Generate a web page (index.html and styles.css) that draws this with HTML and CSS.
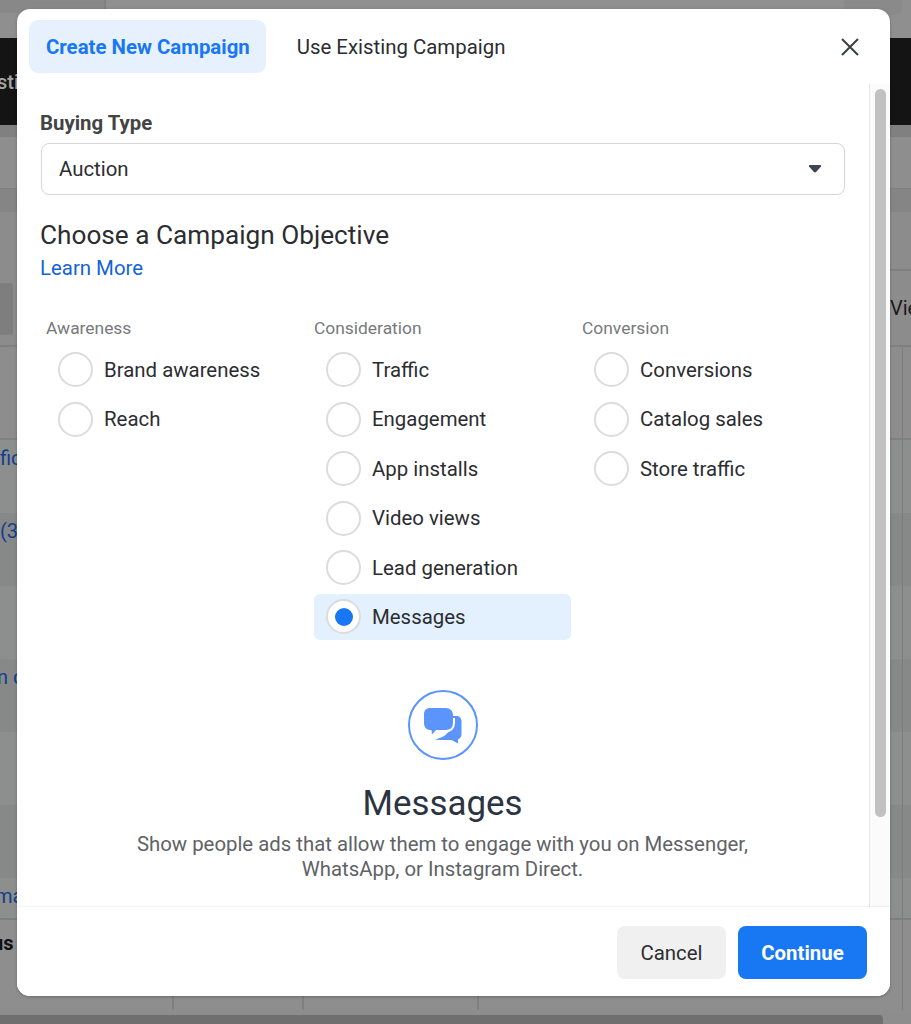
FILE: index.html
```html
<!DOCTYPE html>
<html lang="en">
<head>
    <meta charset="UTF-8">
    <meta name="viewport" content="width=device-width, initial-scale=1.0">
    <title>Create New Campaign</title>
    <link rel="stylesheet" href="styles.css">
</head>
<body>
    <!-- dimmed page behind the dialog -->
    <div class="backdrop">
        <div class="bg-row bg-top"><span class="bg-top-cell"></span><span class="bg-top-pill"></span></div>
        <div class="bg-row bg-dark"><span class="bg-left bg-left-light">sti</span></div>
        <div class="bg-row bg-band"></div>
        <div class="bg-row bg-sub"></div>
        <div class="bg-row bg-band2"></div>
        <div class="bg-row bg-tools"><span class="bg-tool"></span><span class="bg-right">Vie</span></div>
        <div class="bg-row bg-head"></div>
        <div class="bg-row bg-cell"><span class="bg-left bg-link">fic</span></div>
        <div class="bg-row bg-cell bg-alt"><span class="bg-left bg-link">(3</span></div>
        <div class="bg-row bg-cell"></div>
        <div class="bg-row bg-cell bg-alt"><span class="bg-left bg-link bg-link-n">n c</span></div>
        <div class="bg-row bg-cell"></div>
        <div class="bg-row bg-cell bg-alt"></div>
        <div class="bg-row bg-last"><span class="bg-left bg-link bg-link-last">ma</span></div>
        <div class="bg-row bg-total">
            <span class="bg-left bg-left-bold">us</span>
            <span class="col-line col-a"></span>
            <span class="col-line col-b"></span>
            <span class="col-line col-c"></span>
        </div>
        <div class="bg-row bg-track"></div>
        <div class="bg-row bg-scroll"><span class="bg-scroll-thumb"></span></div>
        <div class="bg-right-line"></div>
    </div>

    <div class="modal">
        <div class="modal-tabs">
            <div class="tab tab-active">Create New Campaign</div>
            <div class="tab">Use Existing Campaign</div>
            <svg class="close-icon" width="20" height="20" viewBox="0 0 20 20">
                <path d="M2 2 L18 18 M18 2 L2 18" stroke="#3a3d42" stroke-width="2" fill="none"/>
            </svg>
        </div>

        <div class="modal-scroll">
            <div class="modal-body">
                <div class="field-label">Buying Type</div>
                <div class="select">
                    <span>Auction</span>
                    <svg class="caret" width="14" height="10" viewBox="0 0 16 11">
                        <path d="M2.2 1 H13.8 C15 1 15.4 2.2 14.7 3 L9.2 9 C8.5 9.7 7.5 9.7 6.8 9 L1.3 3 C0.6 2.2 1 1 2.2 1 Z" fill="#3f4450"/>
                    </svg>
                </div>

                <h2 class="objective-title">Choose a Campaign Objective</h2>
                <a class="learn-more">Learn More</a>

                <div class="objectives">
                    <div class="objective-col">
                        <div class="col-title">Awareness</div>
                        <div class="option"><span class="radio"></span>Brand awareness</div>
                        <div class="option"><span class="radio"></span>Reach</div>
                    </div>
                    <div class="objective-col">
                        <div class="col-title">Consideration</div>
                        <div class="option"><span class="radio"></span>Traffic</div>
                        <div class="option"><span class="radio"></span>Engagement</div>
                        <div class="option"><span class="radio"></span>App installs</div>
                        <div class="option"><span class="radio"></span>Video views</div>
                        <div class="option"><span class="radio"></span>Lead generation</div>
                        <div class="option option-selected"><span class="radio radio-on"></span>Messages</div>
                    </div>
                    <div class="objective-col">
                        <div class="col-title">Conversion</div>
                        <div class="option"><span class="radio"></span>Conversions</div>
                        <div class="option"><span class="radio"></span>Catalog sales</div>
                        <div class="option"><span class="radio"></span>Store traffic</div>
                    </div>
                </div>

                <div class="summary">
                    <div class="summary-icon">
                        <svg width="40" height="38" viewBox="0 0 40 38">
                            <path d="M22 10 H33 C36.5 10 38.5 12 38.5 15.5 V28 C38.5 30.5 37.5 32.5 35 33.2 L35 37.5 L28.5 34 H16 L12 33.5 C17 32 20.5 31 23.5 28 C27 25 28 21 28 17 C28 14 26 11 22 10 Z" fill="#5b94fb"/>
                            <path d="M7 2 H23 C27 2 30 5 30 9 V17 C30 21 27 24 23 24 H13 L9 28.5 L8.5 24 H7 C3.5 24 1 21 1 17 V8 C1 4.5 3.5 2 7 2 Z" fill="#5b94fb"/>
                            <path d="M31 12 V17 C31 22 27.5 25.5 23 25.5 H13.5 L11 28.5" fill="none" stroke="#fff" stroke-width="2"/>
                        </svg>
                    </div>
                    <div class="summary-title">Messages</div>
                    <p class="summary-text">Show people ads that allow them to engage with you on Messenger, WhatsApp, or Instagram Direct.</p>
                </div>
            </div>
            <div class="scrollbar"><div class="scroll-thumb"></div></div>
        </div>

        <div class="modal-footer">
            <button class="btn btn-cancel">Cancel</button>
            <button class="btn btn-continue">Continue</button>
        </div>
    </div>
</body>
</html>
```

FILE: styles.css
```css
html, body {
  margin: 0;
  padding: 0;
  height: 1024px;
  overflow: hidden;
}

body {
  position: relative;
  font-family: Roboto, "Liberation Sans", sans-serif;
  background-color: #8d8d8d;
  color: #1c1e21;
}

/* page behind the dialog */
.backdrop {
  display: flex;
  flex-direction: column;
  height: 1024px;
}

.bg-row {
  display: flex;
  justify-content: space-between;
  align-items: flex-start;
  box-sizing: border-box;
  font-size: 20px;
  line-height: 24px;
  white-space: nowrap;
}

.bg-top {
  height: 38px;
  background-color: #8f8f8f;
}

.bg-top-cell {
  width: 104px;
  height: 13px;
  background-color: #888;
  border-right: 2px solid #808080;
}

.bg-top-pill {
  width: 58px;
  height: 15px;
  margin-right: 9px;
  background-color: #8a8a8a;
  border-radius: 0 0 8px 8px;
}

.bg-dark {
  height: 87px;
  background-color: #141414;
  align-items: center;
}

.bg-band {
  height: 12px;
  background-color: #808080;
}

.bg-sub {
  height: 52px;
  background-color: #8e8e8e;
  border-bottom: 1px solid #808080;
}

.bg-band2 {
  height: 23px;
  background-color: #858585;
}

.bg-tools {
  position: relative;
  height: 135px;
  background-color: #8c8c8c;
  border-bottom: 2px solid #7f7f7f;
}

.bg-tools::after {
  content: "";
  position: absolute;
  right: 0;
  top: 57px;
  width: 30px;
  height: 2px;
  background-color: #808080;
}

.bg-tool {
  width: 13px;
  height: 52px;
  margin-top: 71px;
  background-color: #7e7e7e;
  border-radius: 0 3px 3px 0;
}

.bg-head {
  height: 93px;
  background-color: #8d8d8d;
  border-bottom: 2px solid #808080;
}

.bg-cell {
  height: 73px;
  background-color: #8d8f8e;
}

.bg-alt {
  background-color: #878988;
}

.bg-last {
  height: 40px;
  background-color: #8d8f8e;
}

.bg-total {
  height: 92px;
  background-color: #8e8e8e;
  border-top: 2px solid #7e7e7e;
  justify-content: flex-start;
}

.col-line {
  width: 2px;
  height: 90px;
  background-color: #7f7f7f;
}

.col-a { margin-left: 163px; }
.col-b { margin-left: 128px; }
.col-c { margin-left: 173px; }

.bg-track {
  height: 5px;
  background-color: #8d8d8d;
}

.bg-scroll {
  flex: 1;
  background-color: #8d8d8d;
}

.bg-scroll-thumb {
  width: 883px;
  height: 9px;
  background-color: #6f6f6f;
  border-radius: 0 4px 0 0;
}

.bg-right-line {
  position: absolute;
  left: 902px;
  top: 347px;
  width: 1px;
  height: 663px;
  background-color: #7c7c7c;
}

.bg-left {
  display: block;
  width: 17px;
  margin-top: 6px;
}

.bg-dark .bg-left { margin: 0 0 0 -3px; }
.bg-left-light { color: #a5a5a5; font-weight: 500; }
.bg-link { color: #123f8c; }
.bg-link-n { margin-left: -3px; }
.bg-link-last { margin: 6px 0 0 -5px; }
.bg-left-bold { color: #111; font-weight: 700; margin: 11px 0 0 -8px; }
.bg-right { margin-top: 84px; width: 21px; color: #1a1a1a; }

/* dialog */
.modal {
  position: absolute;
  left: 17px;
  top: 9px;
  width: 873px;
  height: 987px;
  background-color: #fff;
  border-radius: 13px;
  box-shadow: 0 1px 3px rgba(0, 0, 0, 0.25);
  display: flex;
  flex-direction: column;
  overflow: hidden;
}

.modal-tabs {
  display: flex;
  align-items: flex-start;
  height: 75px;
  flex-shrink: 0;
  padding: 11px 0 0 12px;
  box-sizing: border-box;
}

.tab {
  height: 53px;
  line-height: 55px;
  padding: 0 17px;
  font-size: 20.4px;
  color: #2b2d31;
  border-radius: 9px;
}

.tab + .tab {
  margin-left: 14px;
}

.tab-active {
  background-color: #e7f0fd;
  color: #1877f2;
  font-weight: 700;
  padding-right: 16px;
}

.close-icon {
  margin-left: auto;
  margin-right: 30px;
  margin-top: 17px;
}

.modal-scroll {
  display: flex;
  height: 823px;
  flex-shrink: 0;
  overflow: hidden;
}

.modal-body {
  flex: 1;
  padding: 25px 24px 0 23px;
  min-width: 0;
}

.scrollbar {
  width: 21px;
  box-sizing: border-box;
  background-color: #fbfbfb;
  border-left: 1px solid #e6e6e6;
  padding: 5px 4px 0 5px;
}

.scroll-thumb {
  height: 728px;
  background-color: #c1c1c1;
  border-radius: 6px;
}

.field-label {
  font-size: 20.4px;
  font-weight: 700;
  color: #444;
  line-height: 28px;
}

.select {
  display: flex;
  justify-content: space-between;
  align-items: center;
  height: 52px;
  margin: 6px 0 0 1px;
  padding: 0 22px 0 17px;
  box-sizing: border-box;
  border: 1px solid #d5d5d5;
  border-radius: 8px;
  font-size: 20.4px;
  color: #2b2d31;
}

.objective-title {
  margin: 23px 0 0;
  font-size: 26.2px;
  font-weight: 400;
  line-height: 34px;
  color: #2b2d31;
}

.learn-more {
  display: block;
  margin-top: 1px;
  font-size: 20.4px;
  line-height: 30px;
  color: #1263d6;
}

.objectives {
  display: flex;
  margin: 33px 0 0 6px;
}

.objective-col {
  width: 268px;
  flex-shrink: 0;
  display: flex;
  flex-direction: column;
  gap: 3.4px;
}

.col-title {
  font-size: 17.4px;
  line-height: 24px;
  color: #77797d;
  margin-bottom: 3.6px;
}

.option {
  display: flex;
  align-items: center;
  gap: 11px;
  width: 257px;
  height: 46px;
  padding-left: 12px;
  box-sizing: border-box;
  font-size: 20.4px;
  color: #2b2d31;
  border-radius: 6px;
}

.option-selected {
  background-color: #e3f0fd;
}

.radio {
  width: 35px;
  height: 35px;
  box-sizing: border-box;
  border: 2px solid #dcdcdc;
  border-radius: 50%;
  background-color: #fff;
  flex-shrink: 0;
  display: flex;
  align-items: center;
  justify-content: center;
}

.radio-on::after {
  content: "";
  width: 18px;
  height: 18px;
  border-radius: 50%;
  background-color: #1877f2;
}

.summary {
  display: flex;
  flex-direction: column;
  align-items: center;
  margin-top: 50px;
  text-align: center;
}

.summary-icon {
  width: 70px;
  height: 70px;
  box-sizing: border-box;
  border: 2px solid #5b94fb;
  border-radius: 50%;
  display: flex;
  align-items: center;
  justify-content: center;
}

.summary-title {
  margin-top: 21px;
  font-size: 34.9px;
  line-height: 46px;
  color: #2b3440;
}

.summary-text {
  margin: 5px 0 0;
  width: 650px;
  font-size: 20.35px;
  line-height: 25px;
  color: #606266;
}

.modal-footer {
  flex: 1;
  display: flex;
  justify-content: flex-end;
  gap: 12px;
  padding: 19px 23px 0 0;
  box-shadow: 0 -1px 2px rgba(0, 0, 0, 0.06);
  background-color: #fff;
  z-index: 1;
}

.btn {
  height: 53px;
  border: none;
  border-radius: 8px;
  font-family: inherit;
  font-size: 20.4px;
}

.btn-cancel {
  width: 109px;
  background-color: #f0f0f0;
  color: #2b2d31;
}

.btn-continue {
  width: 129px;
  background-color: #1877f2;
  color: #fff;
  font-weight: 700;
}
```
